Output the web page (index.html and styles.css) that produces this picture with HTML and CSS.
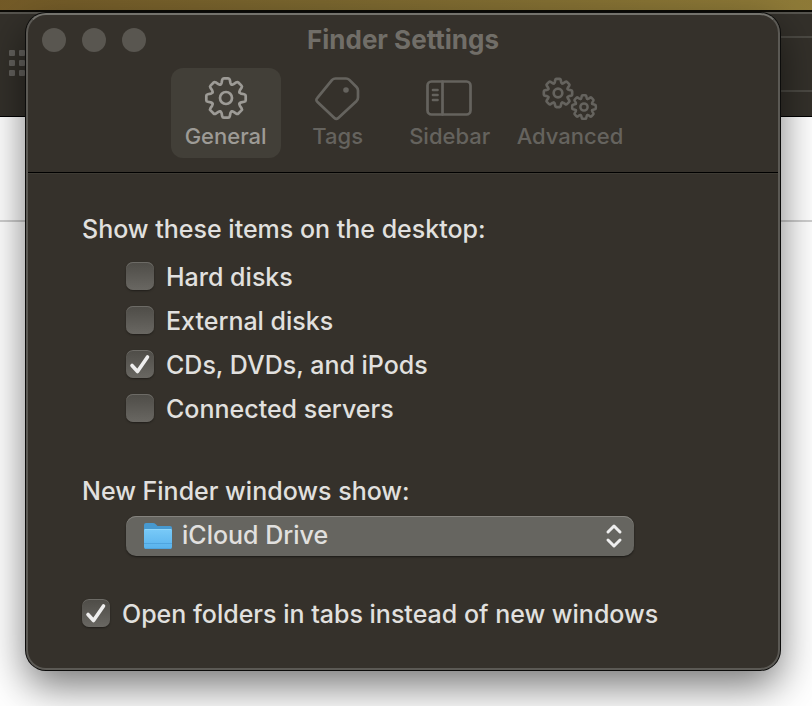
FILE: index.html
```
<!DOCTYPE html>
<html lang="en">
<head>
<meta charset="utf-8">
<title>Finder Settings</title>
<link rel="stylesheet" href="styles.css">
</head>
<body>
<svg class="defs" aria-hidden="true">
  <defs>
    <path id="tooth" d="M-5.6-13.5Q-4.8-13.8-4.4-15.2L-3.8-18.2Q-3.5-19.7-2.200-19.7H2.200Q3.5-19.7 3.8-18.2L4.4-15.2Q4.8-13.8 5.6-13.5"/>
    <g id="gear">
      <use href="#tooth"/><use href="#tooth" transform="rotate(45)"/><use href="#tooth" transform="rotate(90)"/><use href="#tooth" transform="rotate(135)"/><use href="#tooth" transform="rotate(180)"/><use href="#tooth" transform="rotate(225)"/><use href="#tooth" transform="rotate(270)"/><use href="#tooth" transform="rotate(315)"/>
      <circle r="6"/>
    </g>
  </defs>
</svg>
<div class="backdrop" aria-hidden="true">
  <div class="back-toolbar">
    <svg class="grid-icon" width="18" height="28" viewBox="0 0 18 28"><path d="M1 1h4v4H1zM11 1h4v4h-4zM1 11h4v4H1zM11 11h4v4h-4zM1 21h4v4H1zM11 21h4v4h-4z"/></svg>
    <div class="back-field"></div>
  </div>
  <div class="back-header"></div>
</div>
<main class="window">
  <header class="titlebar">
    <div class="title-row">
      <div class="lights">
        <button class="light" aria-label="Close"></button>
        <button class="light" aria-label="Minimize"></button>
        <button class="light" aria-label="Zoom"></button>
      </div>
      <h1>Finder Settings</h1>
    </div>
    <nav class="tabs">
      <button class="tab active">
        <svg width="56" height="46" viewBox="-28 -23 56 46"><use href="#gear"/></svg>
        General
      </button>
      <button class="tab">
        <svg width="56" height="46" viewBox="0 0 56 46"><path d="M25.500 3.500H36Q38 3.500 39.400 4.900L46.500 12Q48 13.500 48 15.500V22.500Q48 24.500 46.600 25.900L28.300 43Q26.300 44.800 24.400 43L7.500 27Q5.300 25 7.400 22.900L22.100 4.900Q23.500 3.500 25.500 3.500Z"/><circle class="solid" cx="36" cy="15" r="2.800"/></svg>
        Tags
      </button>
      <button class="tab">
        <svg width="56" height="46" viewBox="0 0 56 46"><rect x="5.500" y="6.500" width="43" height="33" rx="4"/><path d="M20.500 6.500V39.500M11 15H15.500M11 20H15.500M11 25H15.500"/></svg>
        Sidebar
      </button>
      <button class="tab">
        <svg width="56" height="46" viewBox="0 0 56 46"><g transform="translate(16 18) scale(.72)" stroke-width="3.700"><use href="#gear"/></g><g transform="translate(42 32) scale(.6)" stroke-width="4.200"><use href="#gear"/></g></svg>
        Advanced
      </button>
    </nav>
  </header>
  <form class="content">
    <fieldset>
      <legend>Show these items on the desktop:</legend>
      <label class="check"><input type="checkbox">Hard disks</label>
      <label class="check"><input type="checkbox">External disks</label>
      <label class="check"><input type="checkbox" checked>CDs, DVDs, and iPods</label>
      <label class="check"><input type="checkbox">Connected servers</label>
    </fieldset>
    <div class="field">
      <label for="location">New Finder windows show:</label>
      <div class="popup">
        <select id="location"><option>iCloud Drive</option></select>
        <svg class="folder" width="32" height="30" viewBox="0 0 32 30">
          <defs><linearGradient id="front" x2="0" y2="1"><stop stop-color="#79caf8"/><stop offset="1" stop-color="#58b2ec"/></linearGradient></defs>
          <path fill="#4799d0" d="M2 4q0-2 2-2h7q1.500 0 2.500 1l2 2H28q2 0 2 2v19H2z"/>
          <path fill="url(#front)" d="M2 9q0-1 1-1h26q1 0 1 1v17q0 2-2 2H4q-2 0-2-2z"/>
          <path stroke="#8fd5fa" d="M3 8.500h26"/><path stroke="#4fa5df" d="M2 22.500h28M3 27.500h26"/>
        </svg>
        <svg class="arrows" width="18" height="26" viewBox="0 0 18 26"><path d="M3 9l6-6 6 6M3 17l6 6 6-6"/></svg>
      </div>
    </div>
    <label class="check"><input type="checkbox" checked>Open folders in tabs instead of new windows</label>
  </form>
</main>
</body>
</html>
```

FILE: styles.css
```
* { box-sizing: border-box; }

body {
  margin: 0;
  min-height: 100vh;
  padding: 13px 32px 36px 26px;
  background: #fff;
  color: #e1e0df;
  font: 500 25px/32px Inter, "Open Sans", sans-serif;
  overflow: hidden;
}

button, select { font: inherit; color: inherit; border: 0; padding: 0; }

.defs { position: absolute; width: 0; height: 0; }

/* Window lying behind the settings panel */
.backdrop {
  position: absolute;
  inset: 0;
  z-index: -1;
  border-top: 10px solid #000;
  border-image: linear-gradient(90deg, #735a27, #7b672f 40%, #8f7b38) 10;
}
.back-toolbar {
  display: flex;
  justify-content: space-between;
  align-items: flex-start;
  height: 107px;
  padding-left: 9px;
  border-top: 2px solid #0b0a06;
  border-bottom: 1px solid #000;
  background: #33302a;
  box-shadow: inset 0 2px #56544e;
}
.grid-icon { margin-top: 38px; fill: #63615d; stroke: #63615d; stroke-width: 2px; stroke-linejoin: round; }
.back-field { width: 60px; height: 56px; margin-top: 24px; border: solid #4b4943; border-width: 2px 0; }
.back-header { height: 105px; border-bottom: 2px solid #cfcfcf; }

.window {
  border: 2px solid #5b5954;
  border-top-color: #74736d;
  border-radius: 20px;
  background: #35312b;
  box-shadow: 0 0 0 1px #0c0c0b, 0 16px 40px rgba(0, 0, 0, .54);
}

.titlebar { height: 158px; border-bottom: 1px solid #000; box-shadow: 0 1px #3e3b34; }
.title-row {
  display: grid;
  grid-template-columns: 1fr auto 1fr;
  align-items: center;
  height: 50px;
  padding: 0 14px;
}
.lights { display: flex; gap: 16px; }
.light { width: 24px; height: 24px; border-radius: 50%; background: #595650; }
h1 { margin: 0; font-size: 26px; line-height: 32px; font-weight: 700; color: #716e68; }

.tabs { display: flex; justify-content: center; gap: 2px; margin-top: 3px; padding-right: 2px; }
.tab {
  display: flex;
  flex-direction: column;
  align-items: center;
  min-width: 110px;
  height: 90px;
  padding: 7px 10px 0;
  border-radius: 12px;
  background: none;
  color: #65635e;
  font-size: 22px;
  line-height: 30px;
}
.tab.active { background: #423f38; color: #9d9b96; }
.tab svg { fill: none; stroke: currentColor; stroke-width: 2.700; stroke-linecap: round; stroke-linejoin: round; }
.tab .solid { fill: currentColor; stroke: none; }

.content { display: flex; flex-direction: column; gap: 42px; padding: 40px 54px 38px; }
fieldset { display: flex; flex-direction: column; gap: 12px; margin: 0 0 8px; padding: 0; border: 0; }
legend { padding: 0; margin-bottom: 16px; }
fieldset .check { margin-left: 44px; }
.check { display: flex; align-items: center; gap: 12px; }
.check input {
  appearance: none;
  width: 28px;
  height: 28px;
  margin: 0 0 2px;
  border-radius: 7px;
  background: linear-gradient(#4e4c47, #696762);
  box-shadow: inset 0 1px #6d6b66, 0 1px 2px rgba(0, 0, 0, .4);
}
.check input:checked {
  background: url('data:image/svg+xml,<svg xmlns="http://www.w3.org/2000/svg" viewBox="0 0 28 28"><path d="M6 15.500l5.500 6L21.500 7" fill="none" stroke="%23eee" stroke-width="3.600" stroke-linecap="round" stroke-linejoin="round"/></svg>'), linear-gradient(#4e4c47, #696762);
}

.field { display: flex; flex-direction: column; gap: 9px; }
.popup { position: relative; width: 508px; max-width: 100%; margin-left: 44px; }
.popup select {
  appearance: none;
  display: block;
  width: 100%;
  height: 40px;
  padding: 0 40px 2px 56px;
  border-radius: 10px;
  background: #666560;
  box-shadow: inset 0 1px #85837e, 0 1px 2px rgba(0, 0, 0, .5);
}
.folder, .arrows { position: absolute; pointer-events: none; fill: none; }
.folder { left: 16px; top: 5px; }
.arrows { right: 11px; top: 7px; stroke: #eee; stroke-width: 3px; stroke-linecap: round; stroke-linejoin: round; }
```
